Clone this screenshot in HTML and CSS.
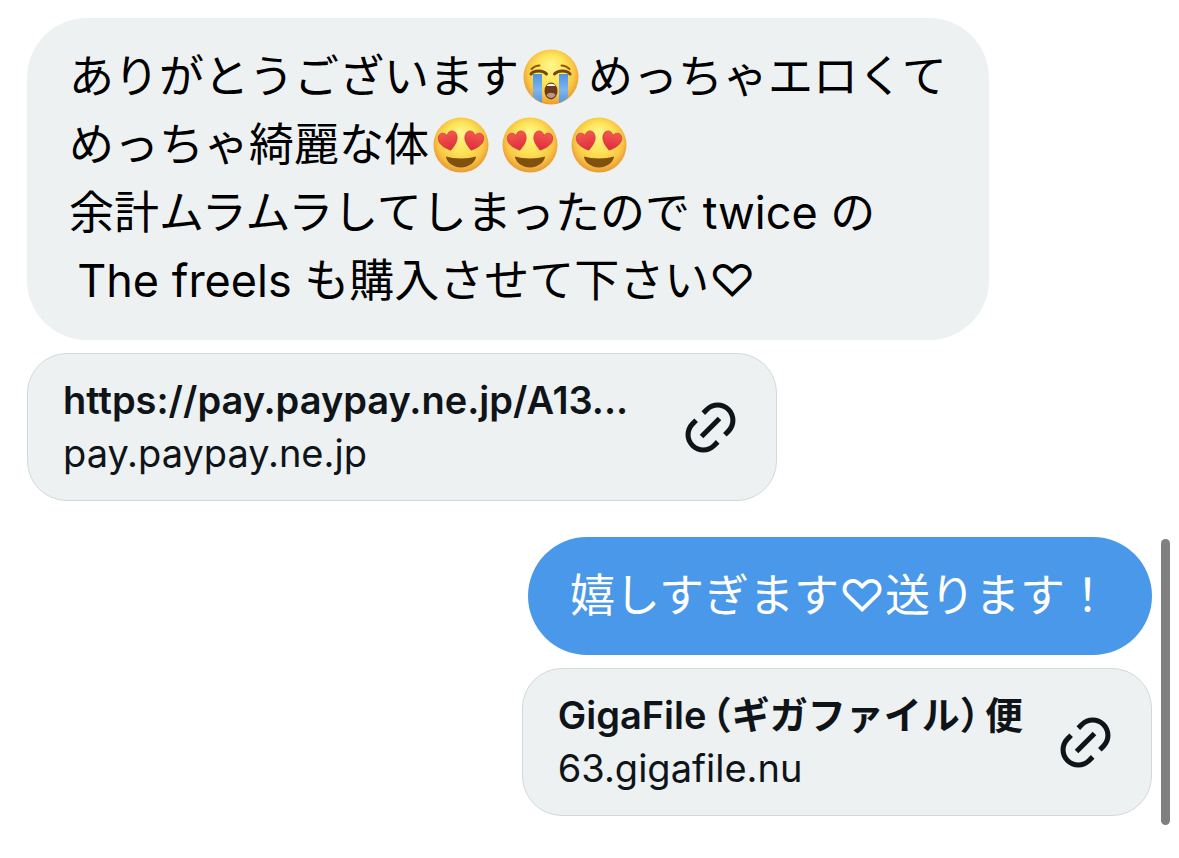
FILE: index.html
```html
<!DOCTYPE html>
<html lang="ja">

<head>
    <meta charset="UTF-8">
    <meta name="viewport" content="width=device-width, initial-scale=1.0">
    <title>メッセージ</title>
    <link rel="stylesheet" href="styles.css">
</head>

<body>
    <!-- Shared shapes -->
    <svg class="sprite" aria-hidden="true">
        <defs>
            <radialGradient id="face" cx="50%" cy="46%" r="54%" fx="50%" fy="26%">
                <stop offset="0" stop-color="#fff78e" />
                <stop offset="0.5" stop-color="#fde458" />
                <stop offset="0.8" stop-color="#f9c544" />
                <stop offset="1" stop-color="#e79a33" />
            </radialGradient>
            <linearGradient id="tear" x1="0" y1="0" x2="0" y2="1">
                <stop offset="0" stop-color="#4f94dc" />
                <stop offset="0.5" stop-color="#7db6ee" />
                <stop offset="1" stop-color="#4a8ddb" />
            </linearGradient>
            <linearGradient id="heart-fill" x1="0" y1="0" x2="0" y2="1">
                <stop offset="0" stop-color="#f4584f" />
                <stop offset="1" stop-color="#dd2c3c" />
            </linearGradient>
            <clipPath id="face-clip">
                <circle cx="28" cy="28" r="27" />
            </clipPath>
            <path id="eye-heart" d="M0 9.500C-5 6-9.500 2-9.500-3.500c0-6.500 7.500-7.500 9.500-2 2-5.500 9.500-4.500 9.500 2 0 5.500-4.500 9.500-9.500 13z" />
        </defs>
        <symbol id="crying" viewBox="0 0 56 56">
            <circle cx="28" cy="28" r="27.500" fill="url(#face)" />
            <g clip-path="url(#face-clip)">
                <path d="M10 25h9v32h-9zM36 25h9v32h-9z" fill="url(#tear)" />
            </g>
            <path d="M8 25c3-4 12-4 15.500 0M31.500 25c3.500-4 12.500-4 15.500 0" fill="none" stroke="#77450f" stroke-width="3" stroke-linecap="round" />
            <path d="M8.500 20c2-2 5-3.500 8-3.500M46.500 20c-2-2-5-3.500-8-3.500" fill="none" stroke="#935710" stroke-width="2" stroke-linecap="round" />
            <ellipse cx="28" cy="42" rx="6.500" ry="8.500" fill="#6d3b18" />
            <path d="M23.500 37c1-3 8-3 9 0z" fill="#fff" />
            <path d="M23.500 46c2-3 7-3 9 0-2 4-7 4-9 0z" fill="#b9988a" />
        </symbol>
        <symbol id="heart-eyes" viewBox="0 0 56 56">
            <circle cx="28" cy="28" r="27.500" fill="url(#face)" />
            <use href="#eye-heart" transform="translate(15.500 24) rotate(-14)" fill="url(#heart-fill)" stroke="#c9303a" stroke-width="0.600" />
            <use href="#eye-heart" transform="translate(40.500 24) rotate(14)" fill="url(#heart-fill)" stroke="#c9303a" stroke-width="0.600" />
            <path d="M13 39.500c8 2.500 22 2.500 30 0 0 5-7 11-15 11s-15-6-15-11z" fill="#80500f" />
        </symbol>
        <symbol id="link" viewBox="0 0 24 24">
            <path d="M18.360 5.640c-1.950-1.960-5.110-1.960-7.070 0L9.880 7.050 8.460 5.640l1.420-1.420c2.730-2.730 7.160-2.730 9.900 0 2.730 2.740 2.730 7.170 0 9.900l-1.420 1.420-1.410-1.420 1.410-1.410c1.960-1.960 1.960-5.120 0-7.070zm-2.120 3.530l-7.070 7.070-1.410-1.410 7.070-7.070 1.410 1.410zm-12.020.710l1.420-1.420 1.410 1.420-1.410 1.410c-1.960 1.960-1.960 5.120 0 7.070 1.950 1.960 5.110 1.960 7.070 0l1.410-1.410 1.420 1.410-1.420 1.420c-2.730 2.730-7.160 2.730-9.900 0-2.730-2.740-2.730-7.170 0-9.900z" />
        </symbol>
    </svg>

    <main class="chat">
        <!-- Received -->
        <section class="group received">
            <p class="bubble">ありがとうございます<svg class="emoji" role="img" aria-label="大泣き"><use href="#crying" /></svg>めっちゃエロくて<br>めっちゃ綺麗な体<svg class="emoji" role="img" aria-label="目がハート"><use href="#heart-eyes" /></svg><svg class="emoji" role="img" aria-label="目がハート"><use href="#heart-eyes" /></svg><svg class="emoji" role="img" aria-label="目がハート"><use href="#heart-eyes" /></svg><br>余計ムラムラしてしまったので twice の<br>&thinsp;The freels も購入させて下さい♡</p>
            <a class="card" href="#">
                <span class="card-text">
                    <strong class="card-title">https://pay.paypay.ne.jp/A13...</strong>
                    <span class="card-domain">pay.paypay.ne.jp</span>
                </span>
                <svg class="card-icon" aria-hidden="true"><use href="#link" /></svg>
            </a>
        </section>

        <!-- Sent -->
        <section class="group sent">
            <p class="bubble">嬉しすぎます♡送ります！</p>
            <a class="card" href="#">
                <span class="card-text">
                    <strong class="card-title">GigaFile&thinsp;（ギガファイル）&thinsp;便</strong>
                    <span class="card-domain">63.gigafile.nu</span>
                </span>
                <svg class="card-icon" aria-hidden="true"><use href="#link" /></svg>
            </a>
        </section>
    </main>

    <div class="scroll-thumb"></div>
</body>

</html>
```

FILE: styles.css
```css
* {
    box-sizing: border-box;
}

body {
    margin: 0;
    background: #fff;
    color: #000;
    font-family: Inter, "Noto Sans CJK JP", sans-serif;
}

.sprite {
    position: absolute;
    width: 0;
    height: 0;
}

.chat {
    display: flex;
    flex-direction: column;
    gap: 36px;
    padding: 18px 27px 40px;
}

.group {
    display: flex;
    flex-direction: column;
    align-items: flex-start;
    gap: 13px;
}

.group.sent {
    align-items: flex-end;
}

/* Bubbles */

.bubble {
    margin: 0;
    padding: 25px 42px;
    border-radius: 60px;
    background: #edf1f2;
    font-size: 45px;
    line-height: 68px;
}

.sent .bubble {
    background: #4a98e9;
    color: #fff;
}

.emoji {
    width: 56px;
    height: 56px;
    margin: 0 9px 0 4px;
    vertical-align: -12px;
}

/* Link cards */

.card {
    display: flex;
    align-items: center;
    justify-content: space-between;
    gap: 32px;
    max-width: 100%;
    padding: 20px 35px;
    border: 1px solid #d3d8dc;
    border-radius: 40px;
    background: #edf1f2;
    color: #0f1419;
    text-decoration: none;
}

.received .card {
    width: 750px;
}

.card-text {
    display: flex;
    flex-direction: column;
    min-width: 0;
    font-size: 38px;
    line-height: 53px;
}

.card-title {
    overflow: hidden;
    font-weight: 600;
    font-feature-settings: "halt";
    text-overflow: ellipsis;
    white-space: nowrap;
}

.card-icon {
    flex: none;
    width: 61px;
    height: 61px;
    fill: currentColor;
}

/* Scroll indicator over the chat */

.scroll-thumb {
    position: fixed;
    top: 539px;
    right: 9px;
    bottom: 33px;
    width: 9px;
    border-radius: 5px;
    background: #808080;
}
```
